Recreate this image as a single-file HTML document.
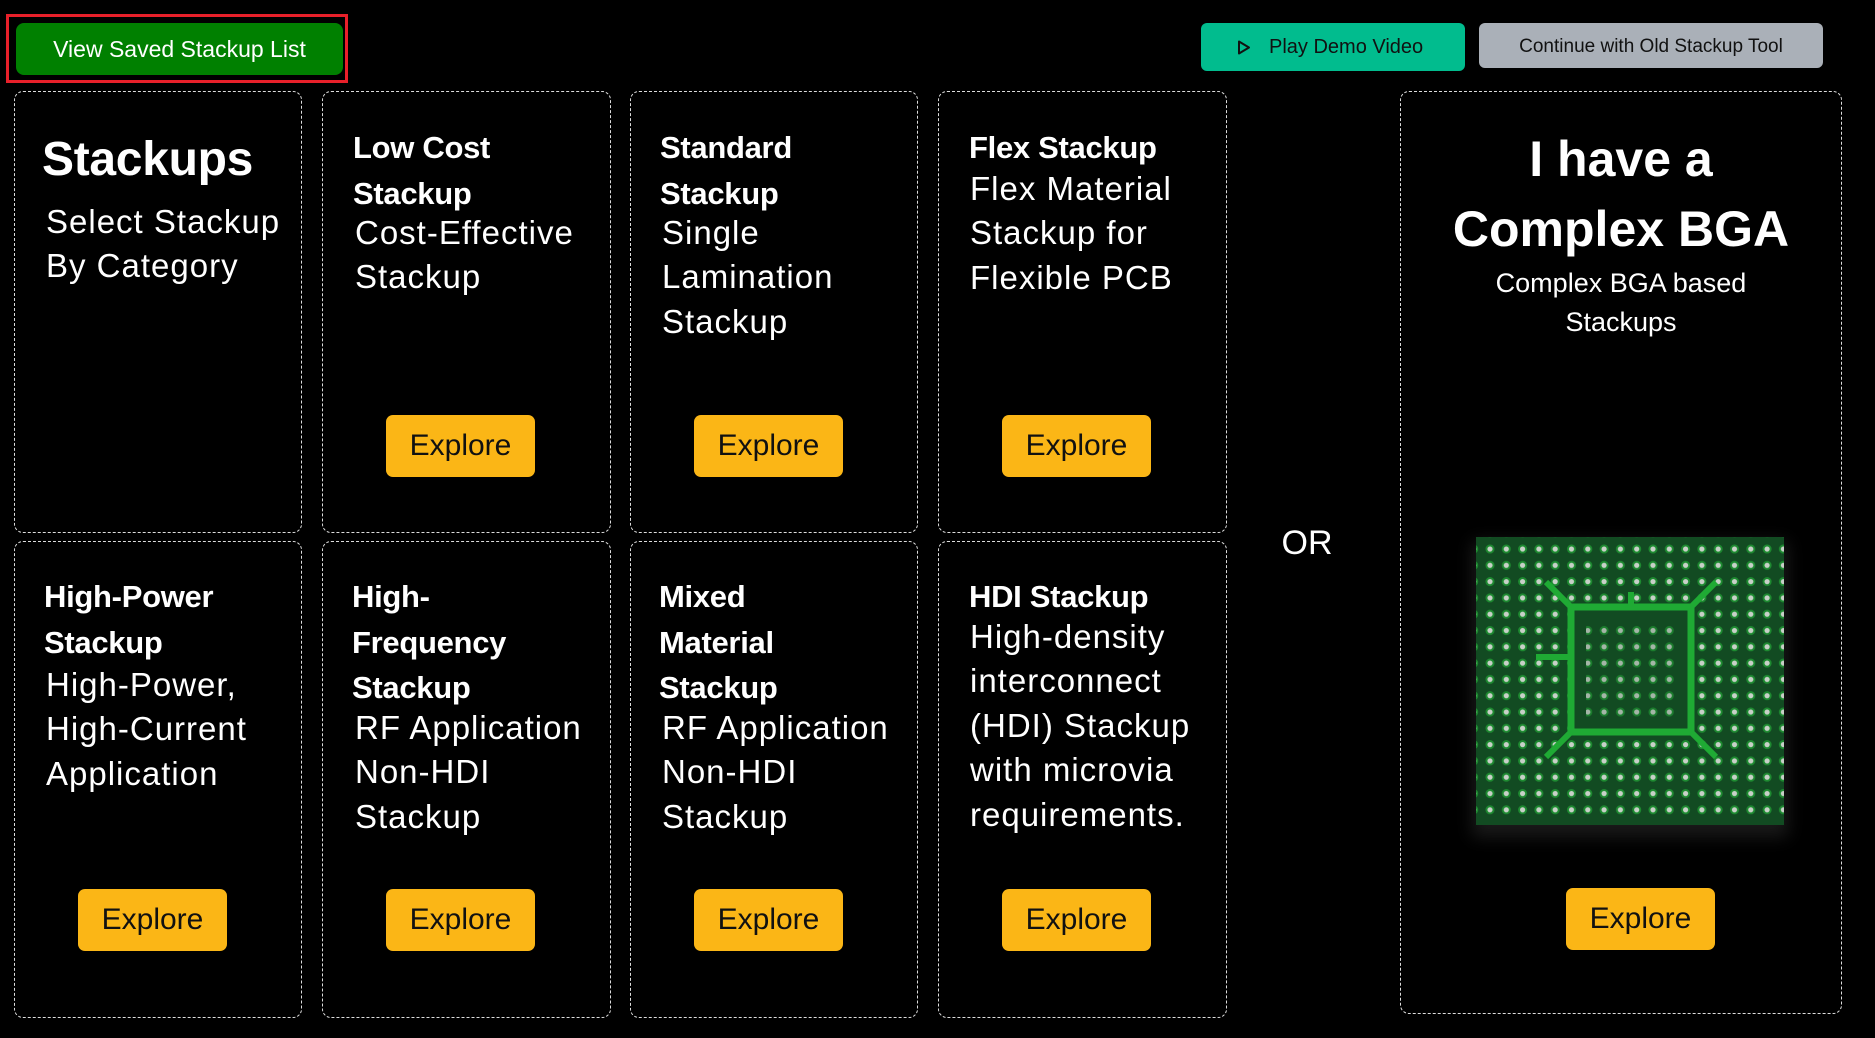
<!DOCTYPE html>
<html><head><meta charset="utf-8"><style>
*{margin:0;padding:0;box-sizing:border-box}
body{width:1875px;height:1038px;background:#000;position:relative;overflow:hidden;font-family:"Liberation Sans",sans-serif;color:#fff}
.a{position:absolute}
.card{position:absolute;border:1px dashed #ddd;border-radius:9px}
.h{position:absolute;font-weight:bold;font-size:31px;line-height:45.5px;white-space:nowrap;letter-spacing:-0.3px}
.d{position:absolute;font-size:33px;line-height:44.4px;white-space:nowrap;letter-spacing:1px}
.ex{position:absolute;width:149px;height:62px;background:#fbb616;border-radius:7px;color:#111;font-size:30px;text-align:center;line-height:62px}
</style></head><body>
<div class="a" style="left:6px;top:14px;width:342px;height:69px;border:3px solid #e8202a"></div>
<div class="a" style="left:16px;top:23px;width:327px;height:52px;background:#008000;border-radius:8px;font-size:23px;line-height:52px;text-align:center">View Saved Stackup List</div>
<div class="a" style="left:1201px;top:23px;width:264px;height:48px;background:#01bc8e;border-radius:6px;color:#111;font-size:20px;line-height:48px;padding-left:32px">
<svg style="position:absolute;left:36px;top:17px" width="14" height="15" viewBox="0 0 14 15"><path d="M2 1.5 L12 7.5 L2 13.5 Z" fill="none" stroke="#111" stroke-width="2" stroke-linejoin="round"/></svg>
<span style="position:absolute;left:68px">Play Demo Video</span></div>
<div class="a" style="left:1479px;top:23px;width:344px;height:45px;background:#aab0b8;border-radius:6px;color:#111;font-size:19px;line-height:47px;text-align:center">Continue with Old Stackup Tool</div>

<div class="card" style="left:14px;top:91px;width:288px;height:442px"></div>
<div class="card" style="left:322px;top:91px;width:289px;height:442px"></div>
<div class="card" style="left:630px;top:91px;width:288px;height:442px"></div>
<div class="card" style="left:938px;top:91px;width:289px;height:442px"></div>
<div class="card" style="left:14px;top:541px;width:288px;height:477px"></div>
<div class="card" style="left:322px;top:541px;width:289px;height:477px"></div>
<div class="card" style="left:630px;top:541px;width:288px;height:477px"></div>
<div class="card" style="left:938px;top:541px;width:289px;height:477px"></div>
<div class="card" style="left:1400px;top:91px;width:442px;height:923px"></div>

<div class="h" style="left:42px;top:130px;font-size:48px;line-height:60px">Stackups</div>
<div class="d" style="left:46px;top:200px">Select Stackup<br>By Category</div>

<div class="h" style="left:353px;top:125px">Low Cost<br>Stackup</div>
<div class="d" style="left:355px;top:211px">Cost-Effective<br>Stackup</div>

<div class="h" style="left:660px;top:125px">Standard<br>Stackup</div>
<div class="d" style="left:662px;top:211px">Single<br>Lamination<br>Stackup</div>

<div class="h" style="left:969px;top:125px">Flex Stackup</div>
<div class="d" style="left:970px;top:167px">Flex Material<br>Stackup for<br>Flexible PCB</div>

<div class="h" style="left:44px;top:574px">High-Power<br>Stackup</div>
<div class="d" style="left:46px;top:663px">High-Power,<br>High-Current<br>Application</div>

<div class="h" style="left:352px;top:574px">High-<br>Frequency<br>Stackup</div>
<div class="d" style="left:355px;top:706px">RF Application<br>Non-HDI<br>Stackup</div>

<div class="h" style="left:659px;top:574px">Mixed<br>Material<br>Stackup</div>
<div class="d" style="left:662px;top:706px">RF Application<br>Non-HDI<br>Stackup</div>

<div class="h" style="left:969px;top:574px">HDI Stackup</div>
<div class="d" style="left:970px;top:615px">High-density<br>interconnect<br>(HDI) Stackup<br>with microvia<br>requirements.</div>

<div class="ex" style="left:386px;top:415px">Explore</div>
<div class="ex" style="left:694px;top:415px">Explore</div>
<div class="ex" style="left:1002px;top:415px">Explore</div>
<div class="ex" style="left:78px;top:889px">Explore</div>
<div class="ex" style="left:386px;top:889px">Explore</div>
<div class="ex" style="left:694px;top:889px">Explore</div>
<div class="ex" style="left:1002px;top:889px">Explore</div>
<div class="ex" style="left:1566px;top:888px">Explore</div>

<div class="a" style="left:1267px;top:522px;width:80px;text-align:center;font-size:34px;line-height:42px">OR</div>

<div class="a" style="left:1400px;top:124px;width:442px;text-align:center;font-weight:bold;font-size:50px;line-height:70px">I have a<br>Complex BGA</div>
<div class="a" style="left:1400px;top:264px;width:442px;text-align:center;font-size:27px;line-height:39px">Complex BGA based<br>Stackups</div>

<div class="a" style="left:1476px;top:537px;width:308px;height:288px;box-shadow:0 8px 16px 4px #1a1a1a">
<svg width="308" height="288" viewBox="0 0 308 288">
<defs><pattern id="p" x="6" y="4" width="16.3" height="16.3" patternUnits="userSpaceOnUse">
<circle cx="8" cy="8" r="4.5" fill="#1d8a30"/><circle cx="8" cy="8" r="2.6" fill="#c8d0c8"/></pattern></defs>
<rect width="308" height="288" fill="#124b22"/>
<rect width="308" height="278" fill="url(#p)"/>
<rect x="95" y="70" width="120" height="125" fill="#124b22"/>
<rect x="95" y="70" width="120" height="125" fill="none" stroke="#1faa34" stroke-width="7"/>
<path d="M95 70 L70 45 M215 70 L240 45 M95 195 L70 220 M215 195 L240 220 M60 120 H95 M155 70 V55" stroke="#1faa34" stroke-width="6"/>
<rect x="110" y="85" width="90" height="95" fill="url(#p)" opacity=".8"/>
</svg></div>
</body></html>
